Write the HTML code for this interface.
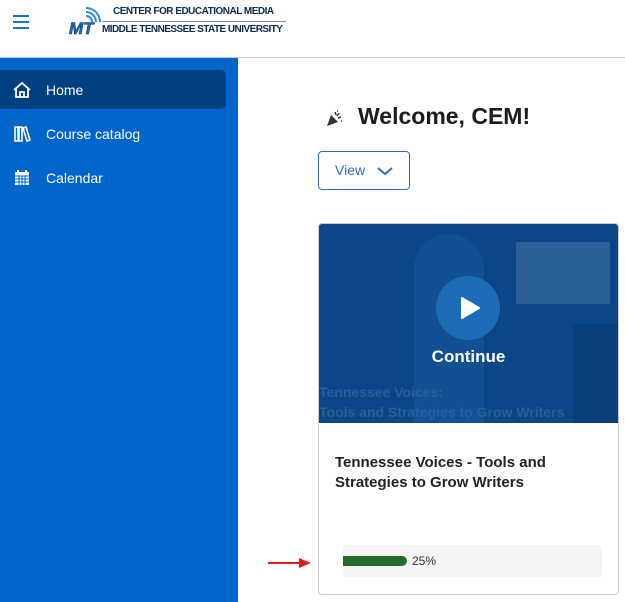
<!DOCTYPE html>
<html><head><style>
*{margin:0;padding:0;box-sizing:border-box}
body{width:625px;height:602px;overflow:hidden;background:#fff;font-family:"Liberation Sans",sans-serif;position:relative}
.abs{position:absolute}
</style></head><body>
<div class="abs" style="left:13px;top:15px;width:16px">
<div style="height:2px;background:#1a73d0;margin-bottom:4px"></div>
<div style="height:2px;background:#1a73d0;margin-bottom:4px"></div>
<div style="height:2px;background:#1a73d0"></div></div>
<svg class="abs" style="left:68px;top:6px" width="36" height="32" viewBox="0 0 36 32">
<path d="M18 6a10 10 0 0 1 10 10M18 2a14 14 0 0 1 14 14M18 10a6 6 0 0 1 6 6" stroke="#2e8ad8" stroke-width="2" fill="none"/>
<text x="1" y="28" font-family="Liberation Sans" font-weight="bold" font-style="italic" font-size="17" fill="#1f6fb8" stroke="#0b3a66" stroke-width="0.6">MT</text></svg>
<div class="abs" style="left:113px;top:6px;font-size:10px;font-weight:bold;color:#0d2b4a;letter-spacing:-0.5px">CENTER FOR EDUCATIONAL MEDIA</div>
<div class="abs" style="left:102px;top:21px;width:184px;height:1px;background:#888"></div>
<div class="abs" style="left:102px;top:24px;font-size:10px;font-weight:bold;color:#0d2b4a;letter-spacing:-0.55px">MIDDLE TENNESSEE STATE UNIVERSITY</div>
<div class="abs" style="left:0;top:57px;width:625px;height:1px;background:#ccc"></div>
<div class="abs" style="left:0;top:58px;width:238px;height:544px;background:#0066cc"></div>
<div class="abs" style="left:0;top:70px;width:226px;height:39px;background:#003f80;border-radius:0 5px 5px 0"></div>
<svg class="abs" style="left:12px;top:81px" width="20" height="18" viewBox="0 0 20 18"><path d="M2 9L10 2l8 7M4 7v9h12V7M8 16v-5h4v5" stroke="#fff" stroke-width="1.8" fill="none"/></svg>
<div class="abs" style="left:46px;top:82px;color:#fff;font-size:14px">Home</div>
<svg class="abs" style="left:13px;top:125px" width="18" height="18" viewBox="0 0 18 18"><path d="M2 2h3v14H2zM6 2h3v14H6zM10 3l3-1 4 13-3 1z" stroke="#fff" stroke-width="1.6" fill="none"/></svg>
<div class="abs" style="left:46px;top:126px;color:#fff;font-size:14px">Course catalog</div>
<svg class="abs" style="left:14px;top:169px" width="16" height="17" viewBox="0 0 16 17"><rect x="1" y="3" width="14" height="13" fill="#fff"/><path d="M4 1v3M12 1v3" stroke="#fff" stroke-width="2"/><path d="M1 7h14M1 10h14M1 13h14M5 7v9M8 7v9M11 7v9" stroke="#0066cc" stroke-width="1"/></svg>
<div class="abs" style="left:46px;top:170px;color:#fff;font-size:14px">Calendar</div>
<svg class="abs" style="left:326px;top:110px" width="17" height="17" viewBox="0 0 17 17"><path d="M1 16L5 5l7 7z" fill="#333"/><path d="M9 2l1 3M13 3l-2 3M15 7l-3 1M11 1h1M15 11h1" stroke="#333" stroke-width="1.5"/></svg>
<div class="abs" style="left:358px;top:103px;font-size:23px;font-weight:bold;color:#1c1c1c">Welcome, CEM!</div>
<div class="abs" style="left:318px;top:151px;width:92px;height:39px;border:1px solid #2a6cc0;border-radius:4px"></div>
<div class="abs" style="left:335px;top:162px;font-size:14px;color:#2a6cc0">View</div>
<svg class="abs" style="left:376px;top:165px" width="18" height="12" viewBox="0 0 18 12"><path d="M2 3l7 6 7-6" stroke="#2a6cc0" stroke-width="2" fill="none"/></svg>
<div class="abs" style="left:318px;top:223px;width:301px;height:372px;border:1px solid #ccc;border-radius:4px"></div>
<div class="abs" style="left:319px;top:224px;width:299px;height:199px;background:#0b4687;overflow:hidden;border-radius:3px 3px 0 0">
<div class="abs" style="left:95px;top:10px;width:70px;height:200px;background:#124f93;border-radius:35px 35px 0 0"></div>
<div class="abs" style="left:197px;top:18px;width:94px;height:62px;background:#2a5f98"></div>
<div class="abs" style="left:254px;top:100px;width:45px;height:99px;background:#093f7a"></div>
<div class="abs" style="left:0;top:158px;font-size:14px;font-weight:bold;color:#2a5f9c;line-height:20px">Tennessee Voices:<br>Tools and Strategies to Grow Writers</div>
</div>
<div class="abs" style="left:436px;top:276px;width:64px;height:64px;border-radius:50%;background:#1e6bb8"></div>
<svg class="abs" style="left:459px;top:296px" width="22" height="24" viewBox="0 0 22 24"><path d="M3 2l17 10L3 22z" fill="#fff" stroke="#fff" stroke-linejoin="round" stroke-width="2"/></svg>
<div class="abs" style="left:319px;top:347px;width:299px;text-align:center;font-size:17px;font-weight:bold;color:#fff">Continue</div>
<div class="abs" style="left:335px;top:453px;font-size:15px;font-weight:bold;color:#222;line-height:20px">Tennessee Voices - Tools and<br>Strategies to Grow Writers</div>
<div class="abs" style="left:343px;top:545px;width:259px;height:32px;background:#f4f4f4;border-radius:4px"></div>
<div class="abs" style="left:343px;top:556px;width:64px;height:10px;background:#256b2c;border-radius:0 5px 5px 0"></div>
<div class="abs" style="left:412px;top:554px;font-size:12px;color:#333">25%</div>
<svg class="abs" style="left:268px;top:557px" width="46" height="12" viewBox="0 0 46 12"><path d="M0 6h34" stroke="#e21b1b" stroke-width="2"/><path d="M31 1l12 5-12 5z" fill="#e21b1b"/></svg>
</body></html>
